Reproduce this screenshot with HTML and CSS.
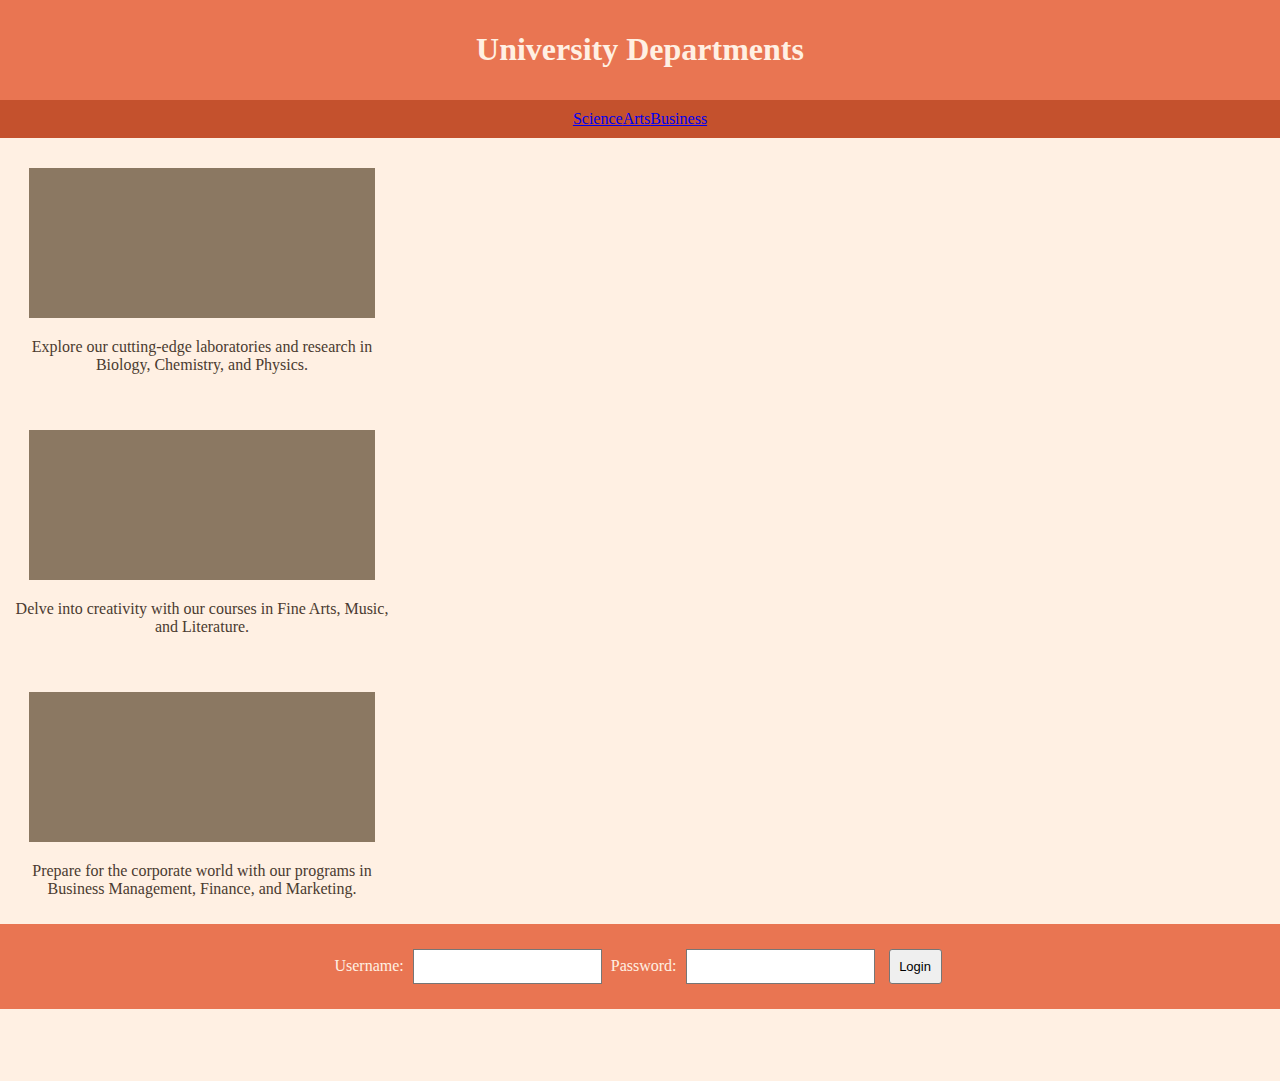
FILE: index.html
```html
<!DOCTYPE html>
<html lang="en">
<head>
<meta charset="utf-8">
<title>University Departments</title>
<link rel="stylesheet" href="styles.css">
</head>
<body>
<header class="site-header">
  <h1 class="site-title">University Departments</h1>
</header>
<nav class="site-nav">
  <a href="#science">Science</a><a href="#arts">Arts</a><a href="#business">Business</a>
</nav>
<main class="departments">
  <section class="dept" id="science">
    <div class="dept-image"></div>
    <p class="dept-text">Explore our cutting-edge laboratories and research in Biology, Chemistry, and Physics.</p>
  </section>
  <section class="dept" id="arts">
    <div class="dept-image"></div>
    <p class="dept-text">Delve into creativity with our courses in Fine Arts, Music, and Literature.</p>
  </section>
  <section class="dept" id="business">
    <div class="dept-image"></div>
    <p class="dept-text">Prepare for the corporate world with our programs in Business Management, Finance, and Marketing.</p>
  </section>
</main>
<footer class="site-footer">
  <form class="login-form">
    <label class="login-label" for="username">Username:</label>
    <input class="login-input" type="text" id="username">
    <label class="login-label pass-label" for="password">Password:</label>
    <input class="login-input" type="password" id="password">
    <button class="login-button" type="button">Login</button>
  </form>
</footer>
</body>
</html>
```
FILE: styles.css
```css
html, body {
  margin: 0;
  padding: 0;
}
body {
  background: #fff0e3;
  font-family: "Liberation Serif", "Times New Roman", serif;
  font-size: 16px;
  color: #4a3b30;
}
.site-header {
  background: #e97552;
  height: 100px;
  box-sizing: border-box;
  padding-bottom: 2px;
  display: flex;
  align-items: center;
  justify-content: center;
}
.site-title {
  margin: 0;
  font-size: 32px;
  font-weight: bold;
  color: #fff0e3;
  line-height: 37px;
}
.site-nav {
  background: #c4512d;
  height: 38px;
  display: flex;
  align-items: center;
  justify-content: center;
  line-height: 18px;
}
.site-nav a {
  color: #0000ee;
  text-decoration: underline;
}
.departments {
  display: flex;
  flex-direction: column;
  gap: 56px;
  padding: 30px 0 26px;
}
.dept {
  width: 376px;
  padding: 0 14px;
  text-align: center;
}
.dept-image {
  width: 346px;
  height: 150px;
  margin: 0 auto;
  background: #8b7862;
}
.dept-text {
  margin: 20px 0 0;
  line-height: 18px;
}
.site-footer {
  background: #e97552;
  height: 85px;
  display: flex;
  align-items: center;
  justify-content: center;
}
.login-form {
  display: flex;
  align-items: center;
  margin-left: -4px;
}
.login-label {
  color: #fff0e3;
  margin-right: 9px;
  margin-bottom: 2px;
}
.pass-label {
  margin-left: 9px;
}
.login-input {
  box-sizing: border-box;
  width: 189px;
  height: 35px;
  border: 1px solid #767676;
  background: #ffffff;
  margin: 0;
  padding: 0 4px;
}
.login-button {
  box-sizing: border-box;
  margin: 0 0 0 14px;
  width: 53px;
  height: 35px;
  border: 1px solid #767676;
  border-radius: 3px;
  background: #efefef;
  color: #000;
  font-family: "Liberation Sans", Arial, sans-serif;
  font-size: 13px;
  padding: 0;
}
```
